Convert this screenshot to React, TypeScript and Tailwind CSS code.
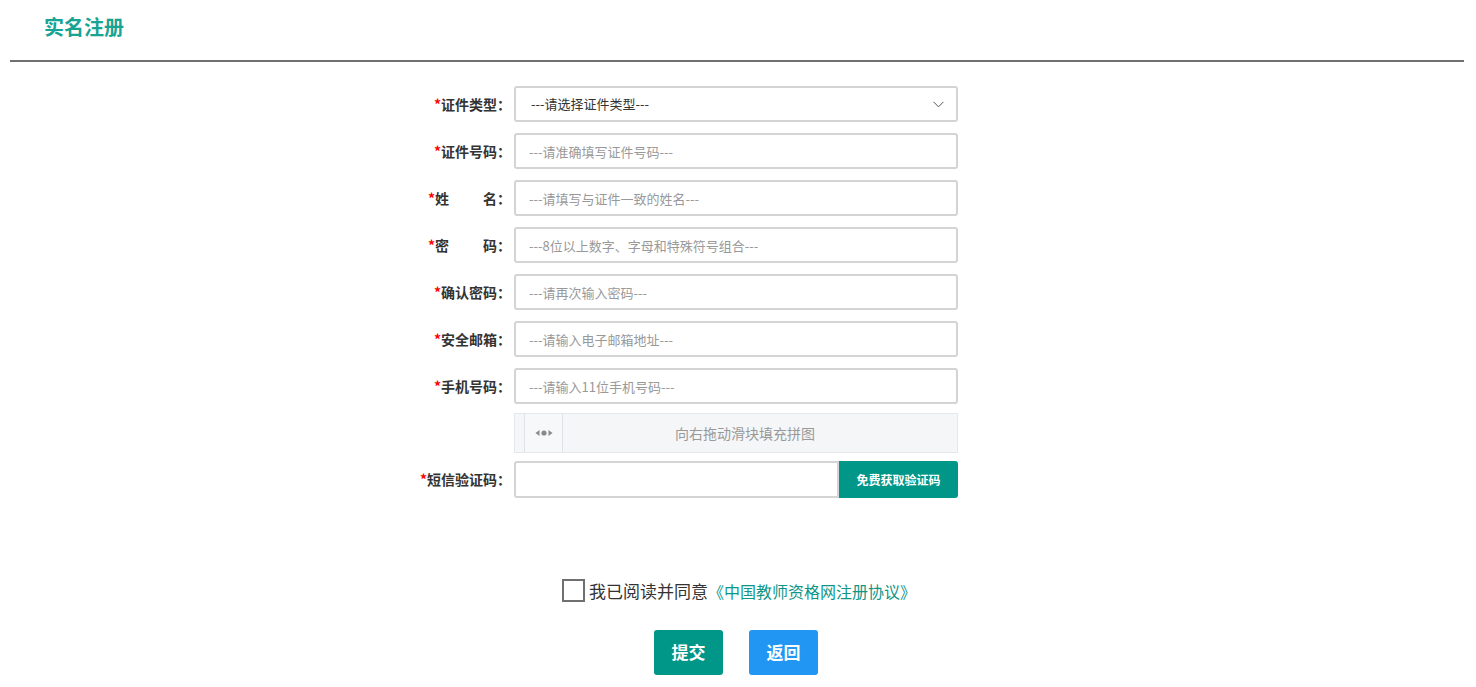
import React from "react";

const font = { fontFamily: '"Microsoft YaHei", "Noto Sans CJK SC", "Noto Sans", sans-serif' };

function Label({ children }: { children: React.ReactNode }) {
  return (
    <div className="w-[110px] shrink-0 -ml-[110px] pr-[3px] flex justify-end items-center text-[14px] font-bold text-[#333]">
      {children}
    </div>
  );
}

function Star() {
  return <span className="text-[#ff0000] font-bold">*</span>;
}

function TextRow({ label, placeholder }: { label: React.ReactNode; placeholder: string }) {
  return (
    <div className="flex h-[36px] mb-[11px]">
      <Label>{label}</Label>
      <input
        className="w-[444px] h-[36px] border-2 border-[#d4d4d4] rounded-[3px] pl-[13px] text-[13px] text-[#333] placeholder:text-[#999] outline-none"
        placeholder={placeholder}
      />
    </div>
  );
}

export default function App() {
  return (
    <div className="w-full min-h-[687px] bg-white" style={font}>
      <div className="mx-[10px] mr-[12px] h-[62px] border-b-2 border-[#707070] flex items-center pl-[34px]">
        <span className="text-[20px] font-bold text-[#18a393] leading-none -mt-[6px]">实名注册</span>
      </div>

      <div className="flex justify-center pr-[4px] pt-[24px]">
        <div className="w-[444px]">
          <div className="flex h-[36px] mb-[11px]">
            <Label>
              <Star />证件类型：
            </Label>
            <div className="w-[444px] h-[36px] border-2 border-[#d4d4d4] rounded-[3px] pl-[15px] pr-[12px] flex items-center justify-between">
              <span className="text-[13px] text-[#333]">---请选择证件类型---</span>
              <svg width="11" height="7" viewBox="0 0 11 7" fill="none">
                <path d="M0.5 0.8 L5.5 5.8 L10.5 0.8" stroke="#555" strokeWidth="1" />
              </svg>
            </div>
          </div>
          <TextRow label={<><Star />证件号码：</>} placeholder="---请准确填写证件号码---" />
          <TextRow
            label={
              <>
                <Star />姓<span className="ml-[34px]">名：</span>
              </>
            }
            placeholder="---请填写与证件一致的姓名---"
          />
          <TextRow
            label={
              <>
                <Star />密<span className="ml-[34px]">码：</span>
              </>
            }
            placeholder="---8位以上数字、字母和特殊符号组合---"
          />
          <TextRow label={<><Star />确认密码：</>} placeholder="---请再次输入密码---" />
          <TextRow label={<><Star />安全邮箱：</>} placeholder="---请输入电子邮箱地址---" />
          <div className="flex h-[36px] mb-[9px]">
            <Label>
              <Star />手机号码：
            </Label>
            <input
              className="w-[444px] h-[36px] border-2 border-[#d4d4d4] rounded-[3px] pl-[13px] text-[13px] text-[#333] placeholder:text-[#999] outline-none"
              placeholder="---请输入11位手机号码---"
            />
          </div>

          <div className="h-[40px] mb-[8px] border border-[#e4e7eb] bg-[#f5f6f8] flex items-center pl-[9px]">
            <div className="w-[39px] h-[38px] bg-[#f7f8f9] border-x border-[#e0e2e5] flex items-center justify-center">
              <svg width="18" height="8" viewBox="0 0 18 8">
                <path d="M0.5 4 L4.5 1 L4.5 7 Z" fill="#8a8a8a" />
                <circle cx="9" cy="4" r="2.6" fill="#8a8a8a" />
                <path d="M17.5 4 L13.5 1 L13.5 7 Z" fill="#8a8a8a" />
              </svg>
            </div>
            <div className="flex-1 text-center text-[14px] text-[#999] pr-[30px]">向右拖动滑块填充拼图</div>
          </div>

          <div className="flex h-[37px]">
            <Label>
              <Star />短信验证码：
            </Label>
            <div className="w-[444px] flex">
              <input className="w-[325px] h-[37px] border-2 border-[#d4d4d4] rounded-l-[3px] outline-none px-2 text-[13px]" />
              <button className="flex-1 h-[37px] bg-[#009688] text-white text-[12px] font-bold rounded-r-[3px]">
                免费获取验证码
              </button>
            </div>
          </div>
        </div>
      </div>

      <div className="flex justify-center items-center mt-[80px] pl-[2px]">
        <span className="w-[23px] h-[23px] border-2 border-[#707070] mr-[4px]" />
        <span className="text-[17px] text-[#333]">我已阅读并同意</span>
        <span className="text-[16px] text-[#0f9688]">《中国教师资格网注册协议》</span>
      </div>

      <div className="flex justify-center gap-[26px] mt-[26px] pr-[4px]">
        <button className="w-[69px] h-[45px] bg-[#009688] text-white text-[17px] font-bold rounded-[3px]">提交</button>
        <button className="w-[69px] h-[45px] bg-[#2196f3] text-white text-[17px] font-bold rounded-[3px]">返回</button>
      </div>
    </div>
  );
}
